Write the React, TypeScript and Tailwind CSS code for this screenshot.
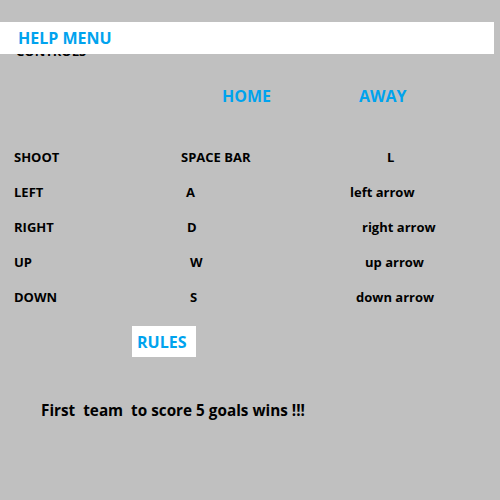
const rows = [
  { action: "SHOOT", home: "SPACE BAR", homeCls: "w-[168px] pl-[0px]", away: "L", awayCls: "pl-[38px]" },
  { action: "LEFT", home: "A", homeCls: "w-[168px] pl-[5px]", away: "left arrow", awayCls: "pl-[1px]" },
  { action: "RIGHT", home: "D", homeCls: "w-[168px] pl-[6px]", away: "right arrow", awayCls: "pl-[13px]" },
  { action: "UP", home: "W", homeCls: "w-[168px] pl-[9px]", away: "up arrow", awayCls: "pl-[16px]" },
  { action: "DOWN", home: "S", homeCls: "w-[168px] pl-[9px]", away: "down arrow", awayCls: "pl-[7px]" },
]

function HelpBar() {
  return (
    <div className="relative z-10 mt-[22px] flex h-[32px] w-[494px] items-center bg-white pl-[18px]">
      <span className="text-[16px] font-bold leading-[24px] text-[#00a3ee]">HELP MENU</span>
    </div>
  )
}

export default function App() {
  return (
    <div className="flex h-[500px] w-[500px] flex-col overflow-hidden bg-[#c0c0c0] font-['Open_Sans',sans-serif] text-black">
      <HelpBar />
      {/* mostly hidden under the bar, only the bottom of the letters shows */}
      <div className="-mt-[13px] pl-[16px] text-[13px] font-bold leading-[20px]">CONTROLS</div>

      <div className="mt-[23px] flex text-[16px] font-bold leading-[24px] text-[#00a3ee]">
        <span className="box-content w-[137px] pl-[222px]">HOME</span>
        <span>AWAY</span>
      </div>

      <div className="mt-[31px] flex flex-col">
        {rows.map((r) => (
          <div key={r.action} className="flex h-[35px] items-center text-[13px] font-bold leading-[20px]">
            <span className="box-content w-[167px] pl-[14px]">{r.action}</span>
            <span className={r.homeCls}>{r.home}</span>
            <span className={r.awayCls}>{r.away}</span>
          </div>
        ))}
      </div>

      <div className="ml-[132px] mt-[12px] flex h-[31px] w-[64px] items-center bg-white pl-[5px]">
        <span className="text-[16px] font-bold leading-[24px] text-[#00a3ee]">RULES</span>
      </div>

      <div className="ml-[41px] mt-[42px] whitespace-pre text-[15.3px] font-bold leading-[22px]">
        First  team  to score 5 goals wins !!!
      </div>
    </div>
  )
}
